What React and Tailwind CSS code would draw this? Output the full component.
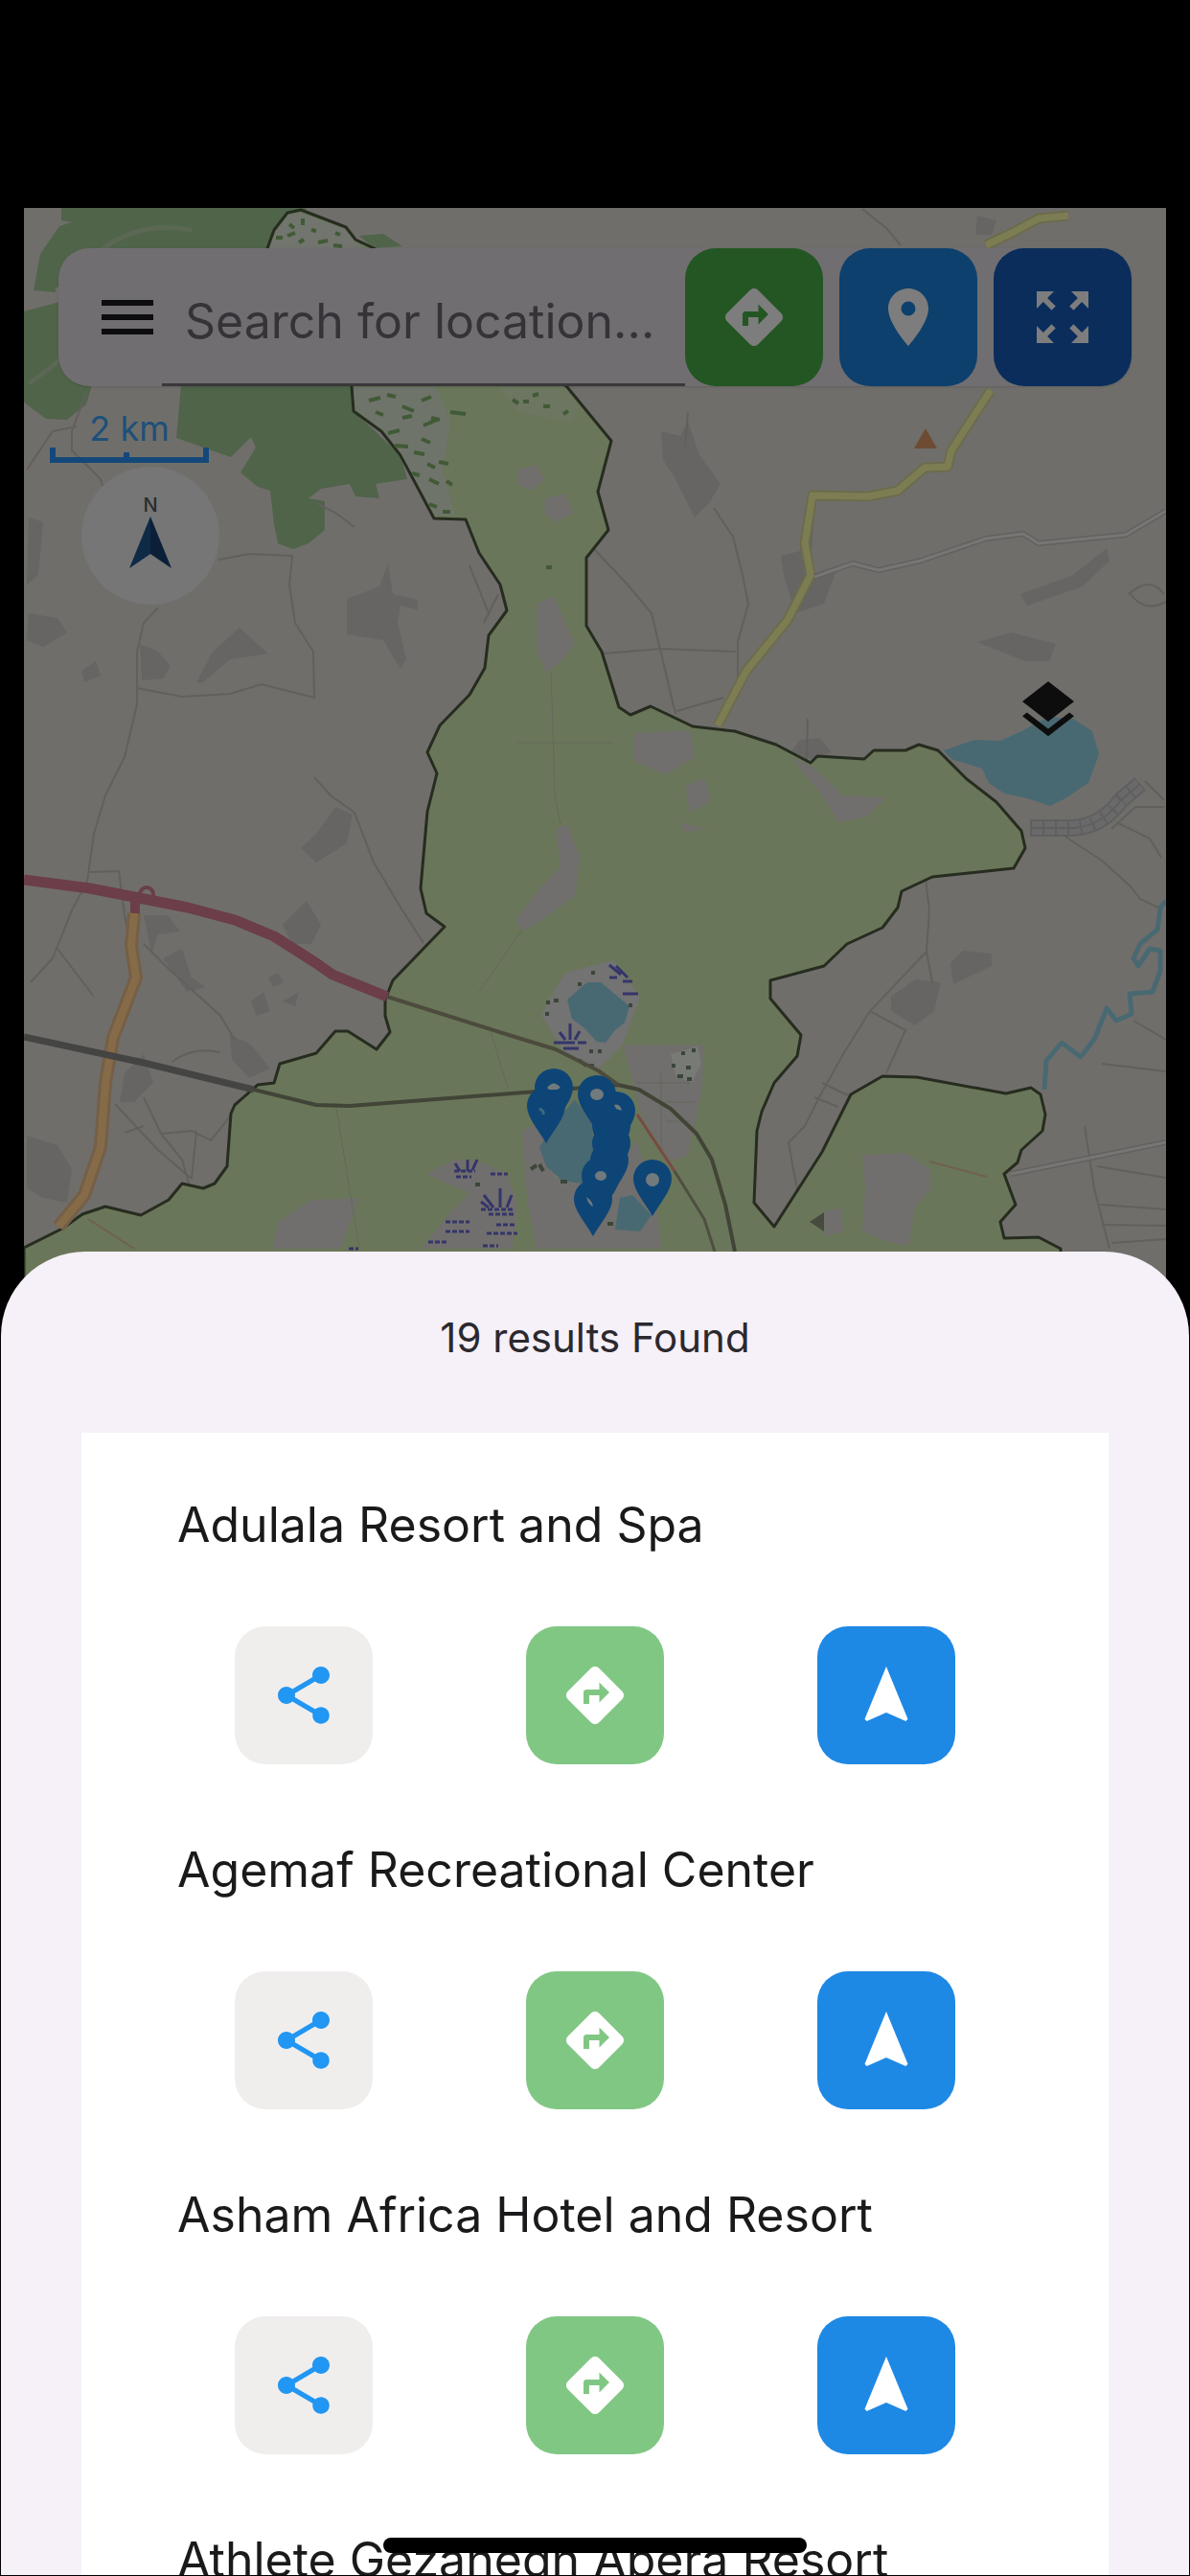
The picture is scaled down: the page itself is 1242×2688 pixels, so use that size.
import { MdDirections, MdLayers, MdLocationOn, MdMenu, MdNavigation, MdShare, MdZoomOutMap } from "react-icons/md";

const results = [
  "Adulala Resort and Spa",
  "Agemaf Recreational Center",
  "Asham Africa Hotel and Resort",
  "Athlete Gezanegn Abera Resort",
];

// tip of every marker, back to front
const pins = [
  [578, 1174], [570, 1193], [623, 1181], [643, 1198], [638, 1214],
  [638, 1232], [636, 1250], [627, 1266], [619, 1290], [681, 1269],
];

const thinRoads = [
  "M165 634 L150 650 L143 680 L143 735 L130 790 L110 830 L98 870 L91 920 L75 950 L55 1000 L32 1025 M143 718 L190 727 L240 724 L273 714 L328 728 L327 680 L308 650 L302 610 L305 580 L260 578 L228 584",
  "M94 910 L124 909 L130 955 L137 990",
  "M328 811 L345 830 L370 848 L390 900 L420 950 L442 984",
  "M98 1040 L60 990 M150 985 L175 1010 L205 1037 L230 1060 L245 1085",
  "M120 1152 L165 1200 L200 1230 M150 1145 L168 1183 L200 1180 L220 1190 L240 1165 M168 1183 L190 1210 L197 1235 M205 1180 L200 1230 M130 1182 L150 1175 M180 1108 Q200 1092 230 1098",
  "M715 467 L718 430 M745 530 L765 560 L775 600 L781 630 L770 670 L770 715 M620 573 L655 610 L680 640 L692 690 L705 745 M628 682 L690 677 L768 680 M706 742 L755 728",
  "M900 218 L925 238 L940 256",
  "M842 795 L843 750",
  "M966 917 L970 950 L967 993 L973 1025 M967 993 L908 1055 L880 1100 L855 1145 L840 1175 L823 1192 L827 1215 L833 1245 M908 1055 L945 1075 L925 1120 M858 1130 L885 1143 M850 1145 L875 1155",
  "M1112 873 L1150 898 L1180 925 L1190 938 L1211 948 M1165 858 L1200 875 L1212 895 M1160 865 L1185 842 L1215 842 M1195 815 L1215 835",
  "M1183 1065 L1217 1085 M1150 1110 L1217 1118 M1132 1175 L1142 1240 L1158 1303 M1145 1217 L1217 1229 M1148 1257 L1217 1262 M1150 1278 L1217 1279 M1160 1297 L1217 1293",
  "M1178 620 Q1200 600 1215 620 M1180 620 Q1195 640 1217 628",
  "M28 490 L55 450 L80 445 M90 410 L75 450 L75 470 L105 500 L108 510 M330 525 L350 535 L370 550",
  "M500 780 L508 690 M490 590 L510 640 M520 620 L505 650",
];

const builtUp = [
  "M690 450 L710 455 L718 440 L730 475 L752 505 L740 525 L725 540 L705 500 L692 480 Z",
  "M815 580 L835 575 L840 530 L850 540 L845 600 L875 590 L860 630 L830 640 L818 600 Z",
  "M1065 620 L1120 600 L1155 572 L1158 585 L1130 612 L1072 632 Z",
  "M1020 670 L1055 660 L1102 672 L1095 690 L1070 690 Z",
  "M362 625 L362 662 L400 668 L418 698 L424 688 L415 650 L418 632 L436 636 L436 626 L410 620 L405 588 L396 612 Z",
  "M205 712 L222 680 L250 655 L280 682 L240 688 L212 712 Z",
  "M146 672 L165 680 L178 695 L170 708 L148 710 Z",
  "M30 640 L60 645 L70 660 L45 675 L28 668 Z M85 700 L100 690 L105 705 L88 712 Z M30 540 L45 545 L40 600 L28 610 Z",
  "M350 842 L368 850 L362 880 L330 900 L314 885 L330 870 Z",
  "M295 965 L320 940 L335 965 L325 985 L305 985 Z",
  "M150 955 L175 955 L188 972 L165 975 L158 995 Z",
  "M170 1000 L190 990 L200 1020 L215 1030 L195 1035 Z M280 1020 L290 1015 L296 1025 L285 1030 Z M262 1045 L275 1035 L282 1055 L268 1060 Z M295 1045 L312 1035 L308 1050 Z",
  "M240 1080 L262 1090 L282 1115 L260 1125 L242 1105 Z",
  "M130 1120 L150 1100 L160 1130 L140 1150 L125 1150 Z",
  "M28 1185 L60 1195 L75 1220 L70 1255 L45 1250 L28 1240 Z",
  "M930 1040 L955 1022 L982 1025 L975 1055 L955 1070 L930 1055 Z",
  "M992 1005 L1005 992 L1035 995 L1035 1008 L995 1027 Z",
  "M1020 225 L1040 230 L1035 245 L1018 245 Z",
  "M822 790 L835 772 L855 770 L868 785 L850 792 Z",
];

const builtUpOnGreen = [
  "M540 490 L560 485 L568 500 L555 512 L540 505 Z M570 520 L590 515 L598 535 L580 545 L568 535 Z",
  "M560 630 L578 622 L590 650 L600 672 L585 690 L570 702 L560 680 Z",
  "M662 765 L720 762 L725 790 L695 808 L662 795 Z M715 820 L735 812 L742 835 L720 848 Z M708 858 L738 865 L715 868 Z",
  "M825 790 L848 800 L880 830 L925 832 L905 852 L875 858 L858 830 Z",
  "M580 865 L592 860 L605 895 L600 935 L565 960 L545 972 L538 960 L565 925 L585 905 Z",
  "M650 1090 L735 1090 L732 1140 L728 1160 L718 1205 L700 1212 L670 1165 Z",
  "M545 1180 L565 1170 L580 1230 L640 1220 L665 1190 L685 1260 L690 1303 L560 1303 L550 1250 Z",
  "M900 1205 L945 1203 L970 1220 L972 1240 L955 1260 L948 1300 L925 1295 L900 1285 L903 1240 Z",
  "M290 1275 L325 1252 L375 1250 L355 1303 L285 1303 Z",
  "M858 1265 L878 1260 L880 1285 L862 1290 Z",
  "M445 1225 L475 1210 L500 1212 L530 1225 L540 1260 L535 1303 L440 1303 L470 1265 L490 1245 Z",
];

const MapDrawing = () => {
  return (
    <svg
      className="absolute inset-0 w-full h-full"
      viewBox="25 217 1192 1130"
      preserveAspectRatio="xMidYMin slice"
      aria-hidden="true"
    >
      <rect x="25" y="217" width="1192" height="1130" fill="#706e6b" />
      {/* forest */}
      <g fill="#50644a">
        <path d="M64 217 H320 L280 300 H58 V305 L35 303 L42 265 L62 236 L75 232 L64 230 Z" />
        <path d="M25 325 L62 315 L90 340 L95 405 L90 422 L70 438 L48 437 L25 420 Z" />
        <path d="M190 390 L184 457 L241 477 L262 456 L267 467 L251 493 L269 508 L282 512 L286 547 L290 567 L306 573 L322 567 L339 553 L339 523 L322 520 L335 510 L365 505 L371 518 L396 520 L392 505 L425 500 L418 475 L369 429 L367 390 Z" />
        <path d="M375 246 L400 244 L420 257 L390 259 Z" />
      </g>
      <path d="M70 300 Q120 225 200 240 M30 400 Q60 380 90 350" fill="none" stroke="#5b6854" strokeWidth="5" />
      <g fill="#666564">
        {builtUp.map((d) => <path key={d} d={d} />)}
      </g>
      <g fill="none" stroke="#625f5d" strokeWidth="2">
        {thinRoads.map((d) => <path key={d} d={d} />)}
      </g>
      <path d="M1075 864 H1120 Q1150 862 1170 835 L1190 818" fill="none" stroke="#605f60" strokeWidth="18" />
      <path d="M1075 864 H1120 Q1150 862 1170 835 L1190 818" fill="none" stroke="#6b6a6a" strokeWidth="14" />
      <path d="M1075 864 H1120 Q1150 862 1170 835 L1190 818" fill="none" stroke="#605f60" strokeWidth="14" strokeDasharray="2 11" />
      <path d="M1075 864 H1120 Q1150 862 1170 835 L1190 818" fill="none" stroke="#605f60" strokeWidth="2" />
      {/* woreda area */}
      <path
        d="M278 262 L286 240 L300 222 L314 219 L361 237 L371 250 L390 259 L592 404 L638 460 L624 513 L635 553 L612 582 L612 653 L628 680 L646 738 L658 746 L679 737 L723 758 L767 763 L810 777 L846 796 L853 789 L902 792 L912 783 L945 783 L959 777 L979 783 L1009 813 L1040 837 L1066 867 L1070 885 L1058 906 L973 915 L941 930 L937 947 L921 968 L884 985 L860 1008 L804 1023 L804 1042 L836 1080 L832 1102 L808 1130 L795 1160 L790 1180 L787 1255 L808 1280 L858 1202 L888 1142 L921 1123 L957 1124 L1050 1141 L1076 1135 L1086 1142 L1091 1163 L1088 1180 L1066 1200 L1062 1213 L1048 1225 L1060 1257 L1044 1275 L1048 1292 L1084 1291 L1107 1303 V1347 H25 V1302 L65 1282 L86 1267 L110 1259 L147 1268 L176 1252 L190 1235 L212 1240 L224 1235 L237 1217 L241 1162 L245 1153 L269 1132 L286 1130 L292 1110 L330 1099 L350 1076 L363 1076 L393 1095 L407 1077 L402 1060 L402 1043 L410 1023 L464 967 L445 953 L439 927 L446 847 L456 807 L446 785 L459 757 L490 725 L506 697 L510 663 L529 637 L522 610 L500 577 L486 542 L453 541 L418 475 L398 450 L369 429 L367 403 Z"
        fill="#6a7659" stroke="#262c1f" strokeWidth="3" strokeLinejoin="round"
      />
      {/* heath */}
      <path d="M280 262 L288 241 L301 224 L314 222 L360 239 L372 254 L384 262 Z" fill="#71756d" />
      <path d="M369 404 H455 L470 440 L462 490 L475 538 L454 538 L419 474 L399 448 L371 428 Z" fill="#6f746b" />
      <path d="M520 404 H590 L605 425 L595 440 L540 430 Z" fill="#6c7660" />
      <path
        d="M288 248 h7 M300 246 l8 -3 M302 234 l5 4 M316 228 v7 M325 240 l5 1 M332 253 l10 -2 M348 256 l9 1 M350 243 l5 2 M312 253 l5 -3 M385 418 l12 -3 M404 412 l9 2 M392 430 l8 3 M420 424 l12 5 M440 418 l10 -4 M405 452 l12 -3 M420 436 l10 -2 M442 444 l14 -6 M450 436 l9 2 M412 465 l14 1 M440 458 l9 4 M470 430 l16 2 M432 472 l11 2 M446 484 l8 4 M458 482 l10 2 M430 494 l8 2 M448 500 l10 5 M466 502 l6 4 M448 526 l8 3 M462 534 h8 M535 417 l6 4 M556 413 l6 -2 M567 424 h7 M588 432 l5 -3 M546 419 h6 M570 592 h6"
        fill="none" stroke="#415a36" strokeWidth="4"
      />
      <path d="M590 1015 L640 1002 L668 1040 L650 1090 L625 1115 L590 1100 L565 1060 L575 1040 Z" fill="#727372" />
      <path d="M548 1195 L575 1220 L600 1232 L560 1225 Z" fill="#76796c" />
      <g fill="#706f6d">
        {builtUpOnGreen.map((d) => <path key={d} d={d} />)}
      </g>
      <path d="M700 1100 L728 1092 L732 1110 L722 1130 L705 1122 Z" fill="#787a76" />
      <g fill="none" stroke="#63695a" strokeWidth="1">
        <path d="M575 702 L577 760 L579 830 L585 860 M540 775 H640 M545 970 L500 1035 M350 1150 L375 1303 M510 1070 L530 1135" />
        <path d="M665 1130 H720 M690 1150 H725 M695 1170 H720 M690 1120 V1200" />
      </g>
      {/* water */}
      <g fill="#496972">
        <path d="M985 783 L1017 772 L1044 773 L1066 763 L1094 748 L1120 750 L1140 763 L1147 787 L1136 817 L1112 833 L1096 841 L1072 833 L1048 828 L1032 817 L1025 802 L993 792 Z" />
        <path d="M613 1025 L627 1025 L657 1050 L652 1067 L642 1075 L632 1088 L623 1087 L610 1073 L597 1063 L592 1043 Z" />
        <path d="M600 1147 L618 1173 L620 1207 L607 1235 L587 1232 L570 1217 L563 1197 L583 1167 Z" />
        <path d="M647 1250 L660 1247 L680 1268 L668 1285 L642 1283 Z" />
      </g>
      <path d="M1217 940 L1211 947 L1208 970 L1190 985 L1183 1000 L1188 1008 L1200 990 L1211 992 V1013 L1203 1035 L1179 1037 L1181 1058 L1165 1065 L1155 1052 L1143 1083 L1128 1103 L1108 1088 L1092 1107 L1090 1137" fill="none" stroke="#496972" strokeWidth="5" strokeLinejoin="round" />
      {/* marsh */}
      <g fill="none" stroke="#34356a" strokeWidth="3">
        <path d="M595 1085 V1068 M590 1085 L584 1077 M600 1085 L605 1076 M578 1088 H612 M588 1094 H604" strokeDasharray="22 3" />
        <path d="M636 1007 L648 1017 M643 1008 L655 1020 M636 1020 H644 M650 1024 H660 M650 1037 H666" />
        <path d="M522 1260 V1240 M515 1260 L505 1247 M529 1260 L534 1247 M510 1260 L502 1254" />
        <path d="M488 1222 V1210 M480 1222 L475 1214 M493 1221 L498 1210" />
        <path d="M502 1262 H536 M510 1267 H536 M474 1222 H496 M476 1228 H492 M512 1225 H530 M465 1275 H490 M465 1285 H490 M518 1278 H538 M508 1287 H540 M447 1296 H468 M504 1300 H520 M364 1303 H374" strokeDasharray="5 2" />
      </g>
      <path d="M570 1046 h4 M569 1058 h4 M578 1044 h5 M603 1027 h4 M617 1015 h4 M656 1049 h4 M615 1097 h4 M624 1097 h4 M604 1106 l8 6 M614 1112 h6 M701 1112 h4 M711 1099 h4 M722 1096 h4 M716 1114 h5 M707 1123 h6 M717 1126 h5 M554 1220 l6 -4 M563 1215 l4 7 M585 1233 h7 M634 1277 h6 M496 1236 h5" stroke="#3b4638" strokeWidth="4" />
      <path d="M845 1275 L860 1265 V1285 Z" fill="#474b3e" />
      {/* main roads */}
      <g fill="none" strokeLinejoin="round">
        <path d="M25 918 L94 927 L135 935 L196 947 L245 960 L286 977 L330 1005 L347 1017 L404 1040" stroke="#6b3e49" strokeWidth="11" />
        <circle cx="153" cy="933" r="7" stroke="#6b3e49" strokeWidth="4" />
        <path d="M141 940 V955" stroke="#6b3e49" strokeWidth="10" />
        <path d="M140 953 L137 987 L142 1020 L118 1083 L110 1130 L105 1197 L88 1247 L61 1280" stroke="#755f47" strokeWidth="14" />
        <path d="M140 953 L137 987 L142 1020 L118 1083 L110 1130 L105 1197 L88 1247 L61 1280" stroke="#866b48" strokeWidth="8" />
        <path d="M25 1082 L150 1109 L265 1137" stroke="#444443" strokeWidth="7" />
        <path d="M265 1137 L330 1153 L365 1154 L560 1139 L645 1132 L667 1137 L700 1157 L727 1183 L743 1210 L757 1257 L767 1306" stroke="#414436" strokeWidth="4" />
        <path d="M404 1040 L531 1080 L580 1095 L624 1117 L645 1132" stroke="#4c4b3d" strokeWidth="4" />
        <path d="M665 1163 L704 1222" stroke="#7a4944" strokeWidth="3" />
        <path d="M704 1222 L735 1272 L746 1306" stroke="#4e4f42" strokeWidth="3" />
        <path d="M92 1272 L140 1303 M970 1212 L1030 1228" stroke="#70604e" strokeWidth="2" />
        <path d="M1115 225 L1084 228 L1056 243 L1029 256 M1034 407 L993 470 L989 487 L965 488 L937 512 L906 518 L848 517 L840 567 L846 600 L822 647 L779 700 L749 757" stroke="#6c6c4c" strokeWidth="11" />
        <path d="M1115 225 L1084 228 L1056 243 L1029 256 M1034 407 L993 470 L989 487 L965 488 L937 512 L906 518 L848 517 L840 567 L846 600 L822 647 L779 700 L749 757" stroke="#7d7d54" strokeWidth="7" />
        <path d="M850 602 L890 588 L917 595 L961 585 L1029 562 L1068 557 L1084 567 L1175 558 L1217 533 M1055 1225 L1217 1192" stroke="#636160" strokeWidth="6" />
        <path d="M850 602 L890 588 L917 595 L961 585 L1029 562 L1068 557 L1084 567 L1175 558 L1217 533 M1055 1225 L1217 1192" stroke="#777674" strokeWidth="3" />
      </g>
      <path d="M966 447 L978 468 H954 Z" fill="#6d4c33" />
      {/* markers */}
      <g fill="#0d4577">
        {pins.map(([x, y]) => (
          <path key={`${x}-${y}`} d={`M${x} ${y} C${x - 8} ${y - 14} ${x - 20} ${y - 27} ${x - 20} ${y - 39} a20 20 0 0 1 40 0 C${x + 20} ${y - 27} ${x + 8} ${y - 14} ${x} ${y} Z`} />
        ))}
      </g>
      <g fill="#717a7c">
        <circle cx="681" cy="1231" r="7" />
        <ellipse cx="623" cy="1142" rx="7" ry="6" />
        <ellipse cx="627" cy="1227" rx="6" ry="5" />
        <path d="M571 1135 q7 -9 14 0 l-4 2 h-8 Z M641 1153 q6 -2 8 6 l-6 -2 Z M612 1249 q6 4 7 10 q-5 -2 -7 -10 Z" />
      </g>
      <path d="M563 1157 q5 2 4 6" fill="none" stroke="#3c6a7c" strokeWidth="3" />
    </svg>
  );
};

const ResultRow = ({ name }) => {
  return (
    <li className="h-[360px] px-20">
      <h2 className="h-[134px] leading-[56px] pl-5 text-[50px] whitespace-nowrap text-[#1a1a1c]">{name}</h2>
      <div className="flex justify-around">
        <button aria-label={`Share ${name}`} className="flex items-center justify-center w-36 h-36 rounded-[32px] bg-[#f0eeed] text-[#2196f3]">
          <MdShare size={72} />
        </button>
        <button aria-label={`Directions to ${name}`} className="flex items-center justify-center w-36 h-36 rounded-[32px] bg-[#81c784] text-white">
          <MdDirections size={72} />
        </button>
        <button aria-label={`Navigate to ${name}`} className="flex items-center justify-center w-36 h-36 rounded-[32px] bg-[#1e88e5] text-white">
          <MdNavigation size={72} />
        </button>
      </div>
    </li>
  );
};

export default function App() {
  return (
    <div className="relative h-screen flex flex-col overflow-hidden bg-black font-[Inter,sans-serif]">
      <main className="relative shrink-0 h-[1130px] mt-[217px] mx-[25px] overflow-hidden">
        <MapDrawing />
        <div className="relative flex flex-col pt-[42px]">
          <div className="flex mx-9 h-36 rounded-[32px] bg-[#716e72] shadow-sm">
            <div className="flex flex-1 min-w-0">
              <button aria-label="Menu" className="shrink-0 w-[108px] pl-9 text-[#0d0c0e]">
                <MdMenu size={72} />
              </button>
              <input
                type="text"
                aria-label="Search for location"
                placeholder="Search for location..."
                className="flex-1 min-w-0 pl-6 pt-3 text-[50px] border-b-3 border-[#3a383b] outline-none placeholder:text-[#353338] placeholder:opacity-100"
              />
            </div>
            <div className="flex gap-[17px]">
              <button aria-label="Directions" className="flex items-center justify-center w-36 h-36 rounded-[32px] bg-[#235623] text-[#7d7d7d]">
                <MdDirections size={72} />
              </button>
              <button aria-label="Places" className="flex items-center justify-center w-36 h-36 rounded-[32px] bg-[#0d406c] text-[#7d7d7d]">
                <MdLocationOn size={72} />
              </button>
              <button aria-label="Full extent" className="flex items-center justify-center w-36 h-36 rounded-[32px] bg-[#0a2d5c] text-[#7d7d7d]">
                <MdZoomOutMap size={72} />
              </button>
            </div>
          </div>
          <div className="ml-[27px] mt-6 w-[166px] text-center text-4xl leading-10 text-[#1d5079]">
            2 km
            <svg className="block w-full h-4" viewBox="0 0 166 16" aria-hidden="true">
              <path d="M3 0 V13 H163 V0 M80 5 V13" fill="none" stroke="#14487a" strokeWidth="6" />
            </svg>
          </div>
          <button aria-label="North" className="flex flex-col items-center ml-[60px] mt-1 w-36 h-36 pt-7 rounded-full bg-[#757675] text-[#2b2b2c]">
            <span className="text-xl leading-6 font-medium">N</span>
            <svg className="w-12 h-14" viewBox="0 0 48 56" aria-hidden="true">
              <path d="M24 0 L46 54 L24 39 Z" fill="#0b2038" />
              <path d="M24 0 L2 54 L24 39 Z" fill="#0e2a46" />
            </svg>
          </button>
          <button aria-label="Layers" className="self-end mr-[87px] mt-[74px] text-[#0d0d0d]">
            <MdLayers size={72} />
          </button>
        </div>
      </main>

      <section className="relative flex-1 min-h-0 flex flex-col mx-px mb-px -mt-[41px] rounded-t-[88px] overflow-hidden bg-[#f6f0f9]">
        <h1 className="shrink-0 h-[189px] pt-[66px] text-center text-[42px] leading-[48px] text-[#2b292e]">19 results Found</h1>
        <ul className="flex-1 min-h-0 overflow-hidden mx-21 pt-[68px] bg-white">
          {results.map((name) => (
            <ResultRow key={name} name={name} />
          ))}
        </ul>
      </section>

      <div className="absolute bottom-6 left-1/2 -translate-x-1/2 w-[442px] h-4 rounded-full bg-black" />
    </div>
  );
}
